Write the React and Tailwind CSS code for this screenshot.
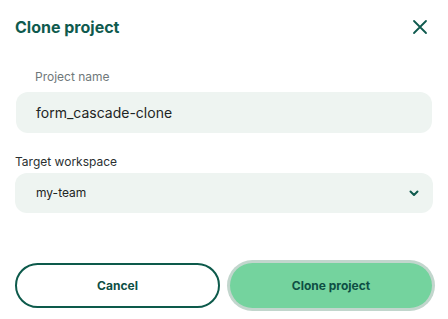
import React from "react";

const CloseIcon = () => (
  <svg width="16" height="16" viewBox="0 0 16 16" fill="none" stroke="#0f5a4e" strokeWidth="1.8" strokeLinecap="round">
    <path d="M2 2L14 14M14 2L2 14" />
  </svg>
);

const Chevron = () => (
  <svg width="10" height="7" viewBox="0 0 10 7" fill="none" stroke="#0f5a4e" strokeWidth="2" strokeLinecap="round" strokeLinejoin="round">
    <path d="M1.5 1.5L5 5L8.5 1.5" />
  </svg>
);

export default function App() {
  return (
    <div className="w-[448px] h-[319px] bg-white px-[15px] pt-[15px] font-['Inter',sans-serif] overflow-hidden">
      <div className="flex items-center justify-between h-6">
        <h2 className="text-base font-bold text-[#0f5a4e]">Clone project</h2>
        <button className="mr-[5px] flex items-center justify-center">
          <CloseIcon />
        </button>
      </div>

      <div className="mt-[30px] pl-[20px] text-xs leading-4 text-[#70787a]">Project name</div>
      <div className="mt-[7px] mx-[1px] h-[41px] rounded-xl bg-[#eef4f1] flex items-center pl-[20px] text-[14px] text-[#1d2424]">
        form_cascade-clone
      </div>

      <div className="mt-[20px] text-[12px] leading-[18px] text-[#2a2f30]">Target workspace</div>
      <div className="mt-[2px] h-[40px] rounded-xl bg-[#eef4f1] flex items-center justify-between pl-[21px] pr-[14px] text-[12px] text-[#1d2424]">
        <span>my-team</span>
        <Chevron />
      </div>

      <div className="mt-[50px] flex gap-2">
        <button className="w-[205px] h-[45px] rounded-full border-2 border-[#0d5a4b] bg-white text-[12px] font-bold text-[#0e4f44]">
          Cancel
        </button>
        <button className="flex-1 ml-[2px] mr-[1px] h-[45px] rounded-full bg-[#74d39e] ring-[3px] ring-[#c2d6cd] text-[12px] font-bold text-[#0e4f44]">
          Clone project
        </button>
      </div>
    </div>
  );
}
